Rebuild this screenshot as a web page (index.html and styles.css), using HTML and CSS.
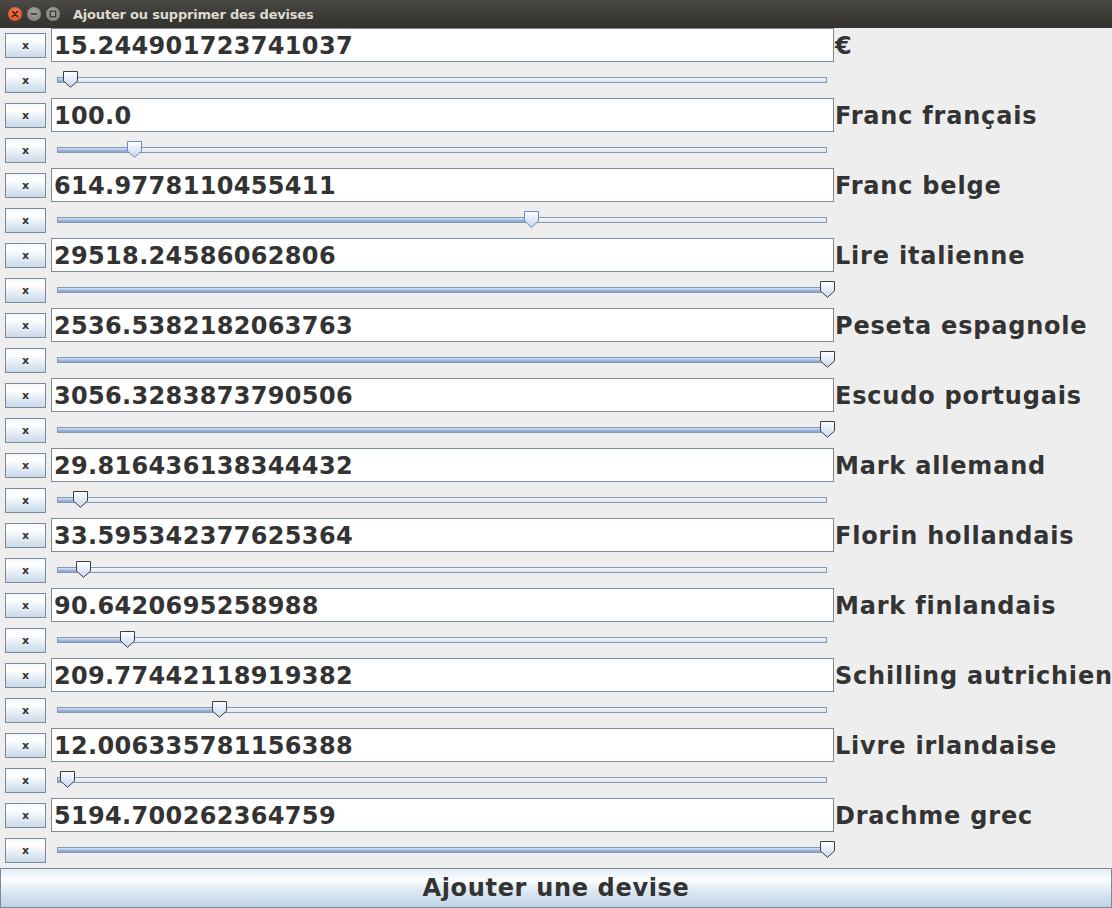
FILE: index.html
```html
<!DOCTYPE html>
<html lang="fr">
<head>
<meta charset="utf-8">
<title>Ajouter ou supprimer des devises</title>
<link rel="stylesheet" href="styles.css">
</head>
<body>
<div class="window">
  <div class="titlebar">
    <div class="wbtns">
      <span class="wbtn close"><svg width="14" height="14" viewBox="0 0 14 14"><path d="M4.5 4.5 L9.5 9.5 M9.5 4.5 L4.5 9.5" stroke="#3a1a10" stroke-width="1.6" stroke-linecap="round"/></svg></span>
      <span class="wbtn"><svg width="14" height="14" viewBox="0 0 14 14"><path d="M4 7 H10" stroke="#3b3a36" stroke-width="1.6"/></svg></span>
      <span class="wbtn"><svg width="14" height="14" viewBox="0 0 14 14"><rect x="4.3" y="4.3" width="5.4" height="5.4" fill="none" stroke="#3b3a36" stroke-width="1.3"/></svg></span>
    </div>
    <div class="title">Ajouter ou supprimer des devises</div>
  </div>

  <div class="content" id="content"></div>

  <button class="add">Ajouter une devise</button>
</div>
<script src="app.js"></script>
</body>
</html>
```

FILE: app.js
```js
var data = [
  ["15.244901723741037", "€", 13, "dark"],
  ["100.0", "Franc français", 77.5, "blue"],
  ["614.9778110455411", "Franc belge", 474, "blue"],
  ["29518.24586062806", "Lire italienne", 770, "dark"],
  ["2536.5382182063763", "Peseta espagnole", 770, "dark"],
  ["3056.3283873790506", "Escudo portugais", 770, "dark"],
  ["29.816436138344432", "Mark allemand", 23, "dark"],
  ["33.595342377625364", "Florin hollandais", 26, "dark"],
  ["90.6420695258988", "Mark finlandais", 70, "dark"],
  ["209.77442118919382", "Schilling autrichien", 162, "dark"],
  ["12.006335781156388", "Livre irlandaise", 10, "dark"],
  ["5194.700262364759", "Drachme grec", 770, "dark"]
];
var html = "";
data.forEach(function (d) {
  var c = d[2];
  html +=
    '<div class="row">' +
      '<button class="xbtn">x</button>' +
      '<div class="field">' + d[0] + '</div>' +
      '<div class="label">' + d[1] + '</div>' +
    '</div>' +
    '<div class="row">' +
      '<button class="xbtn">x</button>' +
      '<div class="slider">' +
        '<div class="track"><div class="fill" style="width:' + c + 'px"></div></div>' +
        '<svg class="thumb ' + d[3] + '" style="left:' + (c - 7.5) + 'px" width="15" height="17" viewBox="0 0 15 17">' +
          '<defs><linearGradient id="tg" x1="0" y1="0" x2="0" y2="1"><stop offset="0" stop-color="#ffffff"/><stop offset="1" stop-color="#c4d6ee"/></linearGradient></defs>' +
          '<path d="M0.5 0.5 H14.5 V10 L7.5 16.3 L0.5 10 Z" fill="url(#tg)"/>' +
        '</svg>' +
      '</div>' +
    '</div>';
});
document.getElementById("content").innerHTML = html;
```

FILE: styles.css
```css
html, body {
  margin: 0;
  padding: 0;
  background: #eeeeee;
}
.window {
  width: 1112px;
  height: 908px;
  display: flex;
  flex-direction: column;
  overflow: hidden;
  font-family: "DejaVu Sans", "Liberation Sans", sans-serif;
}
.titlebar {
  height: 28px;
  flex: 0 0 28px;
  background: linear-gradient(#4a4944, #3a3935 60%, #34332f);
  display: flex;
  align-items: center;
}
.wbtns {
  display: flex;
  gap: 5px;
  margin-left: 8px;
}
.wbtn {
  width: 14px;
  height: 14px;
  border-radius: 50%;
  background: radial-gradient(circle at 50% 35%, #a3a29c, #7d7c77);
  display: block;
  line-height: 0;
}
.wbtn.close {
  background: radial-gradient(circle at 50% 35%, #f3784f, #df4a1e);
}
.title {
  margin-left: 13px;
  color: #dfdbd2;
  font-family: "DejaVu Sans", sans-serif;
  font-weight: bold;
  font-size: 13px;
  letter-spacing: -0.2px;
}
.content {
  flex: 1 1 auto;
  display: flex;
  flex-direction: column;
}
.row {
  height: 35px;
  flex: 0 0 35px;
  display: flex;
  align-items: center;
  position: relative;
}
.xbtn {
  width: 41px;
  height: 25px;
  margin: 0 0 0 5px;
  padding: 0;
  border: 1px solid #7a8a99;
  background: linear-gradient(#f4f8fc, #ffffff 25%, #c9d9ea);
  font-family: "DejaVu Sans", sans-serif;
  font-weight: bold;
  font-size: 11px;
  color: #333333;
  flex: 0 0 auto;
  box-sizing: border-box;
}
.field {
  box-sizing: border-box;
  width: 783px;
  flex: 0 0 783px;
  height: 34px;
  align-self: flex-start;
  margin-left: 5px;
  border: 1px solid #7a8a99;
  background: #ffffff;
  padding-left: 2px;
  padding-top: 1px;
  font-weight: bold;
  font-size: 24px;
  letter-spacing: 0.33px;
  line-height: 32px;
  color: #333333;
  white-space: nowrap;
}
.label {
  margin-left: 1px;
  font-weight: bold;
  font-size: 24px;
  letter-spacing: 0.8px;
  color: #333333;
  white-space: nowrap;
  margin-top: 1px;
}
.slider {
  position: relative;
  margin-left: 11px;
  width: 770px;
  flex: 0 0 770px;
  height: 35px;
  align-self: flex-start;
}
.track {
  position: absolute;
  left: 0;
  right: 0;
  top: 14px;
  height: 6px;
  box-sizing: border-box;
  border: 1px solid #8797ad;
  background: linear-gradient(#f4f7fb, #dbe5f1);
  overflow: hidden;
}
.fill {
  height: 100%;
  box-sizing: border-box;
  background: linear-gradient(#dbe6f4, #9fb7dd 60%, #7f9fd2);
  border-right: 1px solid #6b8bc0;
}
.thumb {
  position: absolute;
  top: 8px;
}
.thumb path {
  stroke-width: 1;
}
.thumb.dark path {
  stroke: #3c3f45;
}
.thumb.blue path {
  stroke: #6a8ac4;
}
.add {
  flex: 0 0 40px;
  height: 40px;
  width: 1112px;
  margin: 0;
  padding: 0;
  box-sizing: border-box;
  border: 1px solid #7a8a99;
  background: linear-gradient(#e4edf6, #fbfdff 30%, #dbe6f1 60%, #bfd3e6);
  font-family: "DejaVu Sans", sans-serif;
  font-weight: bold;
  font-size: 24px;
  letter-spacing: 0.67px;
  color: #333333;
}
```
